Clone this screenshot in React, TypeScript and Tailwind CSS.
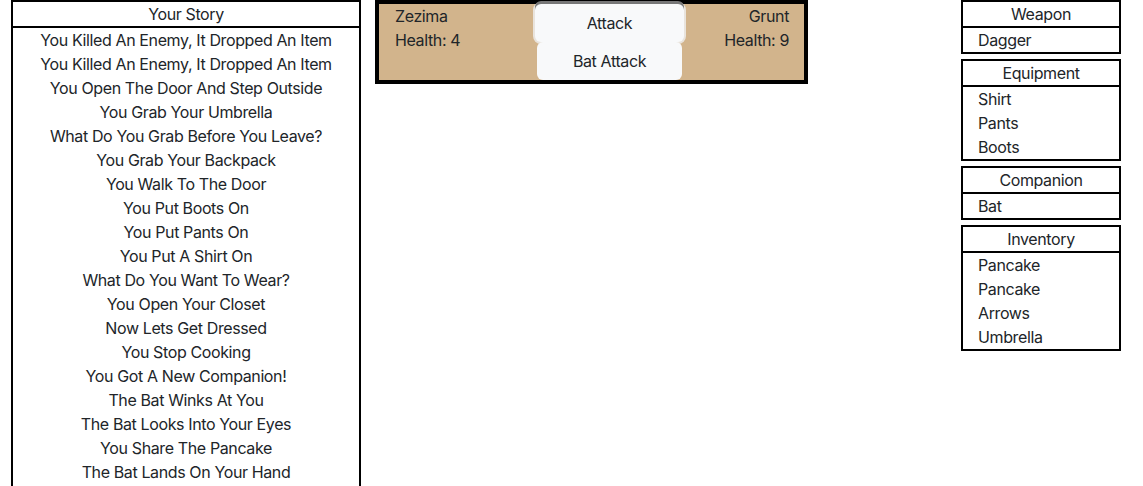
const story = [
  "You Killed An Enemy, It Dropped An Item",
  "You Killed An Enemy, It Dropped An Item",
  "You Open The Door And Step Outside",
  "You Grab Your Umbrella",
  "What Do You Grab Before You Leave?",
  "You Grab Your Backpack",
  "You Walk To The Door",
  "You Put Boots On",
  "You Put Pants On",
  "You Put A Shirt On",
  "What Do You Want To Wear?",
  "You Open Your Closet",
  "Now Lets Get Dressed",
  "You Stop Cooking",
  "You Got A New Companion!",
  "The Bat Winks At You",
  "The Bat Looks Into Your Eyes",
  "You Share The Pancake",
  "The Bat Lands On Your Hand",
];

const panels = [
  { title: "Weapon", items: ["Dagger"] },
  { title: "Equipment", items: ["Shirt", "Pants", "Boots"] },
  { title: "Companion", items: ["Bat"] },
  { title: "Inventory", items: ["Pancake", "Pancake", "Arrows", "Umbrella"] },
];

function Panel({ title, items }: { title: string; items: string[] }) {
  return (
    <div className="border-2 border-black">
      <div className="h-[26px] leading-6 text-center border-b-2 border-black">{title}</div>
      <ul>
        {items.map((item, i) => (
          <li key={i} className="h-6 leading-6 pl-[15px]">
            {item}
          </li>
        ))}
      </ul>
    </div>
  );
}

export default function App() {
  return (
    <div
      className="h-screen overflow-hidden bg-white text-[#212529] text-base tracking-[-0.38px]"
      style={{ fontFamily: "Inter, Roboto, 'Liberation Sans', sans-serif" }}
    >
      <div className="flex items-start pl-[11px] pr-[22px]">
        {/* story log */}
        <div className="w-[350px] shrink-0 border-2 border-black min-h-[560px]">
          <div className="h-[26px] leading-6 text-center border-b-2 border-black">Your Story</div>
          <ul>
            {story.map((line, i) => (
              <li key={i} className="h-6 leading-6 text-center">
                {line}
              </li>
            ))}
          </ul>
        </div>

        {/* battle */}
        <div className="ml-[14px] w-[433px] h-[84px] shrink-0 border-4 border-black bg-[#d2b48c] flex">
          <div className="w-[156px] pl-4 leading-6">
            <div>Zezima</div>
            <div>Health: 4</div>
          </div>
          <div className="w-[145px] ml-[2px] flex flex-col">
            <button className="h-[38px] -mx-[2px] rounded-md bg-[#f8f9fa] shadow-[0_-3px_0_#777,0_0_0_2px_#e9e4dd] leading-6">
              Attack
            </button>
            <button className="h-[38px] rounded-md bg-[#f8f9fa] leading-6">Bat Attack</button>
          </div>
          <div className="flex-1 pr-[15px] leading-6 text-right">
            <div>Grunt</div>
            <div>Health: 9</div>
          </div>
        </div>

        {/* character */}
        <div className="ml-auto w-[160px] flex flex-col gap-[5px]">
          {panels.map((p) => (
            <Panel key={p.title} title={p.title} items={p.items} />
          ))}
        </div>
      </div>
    </div>
  );
}
